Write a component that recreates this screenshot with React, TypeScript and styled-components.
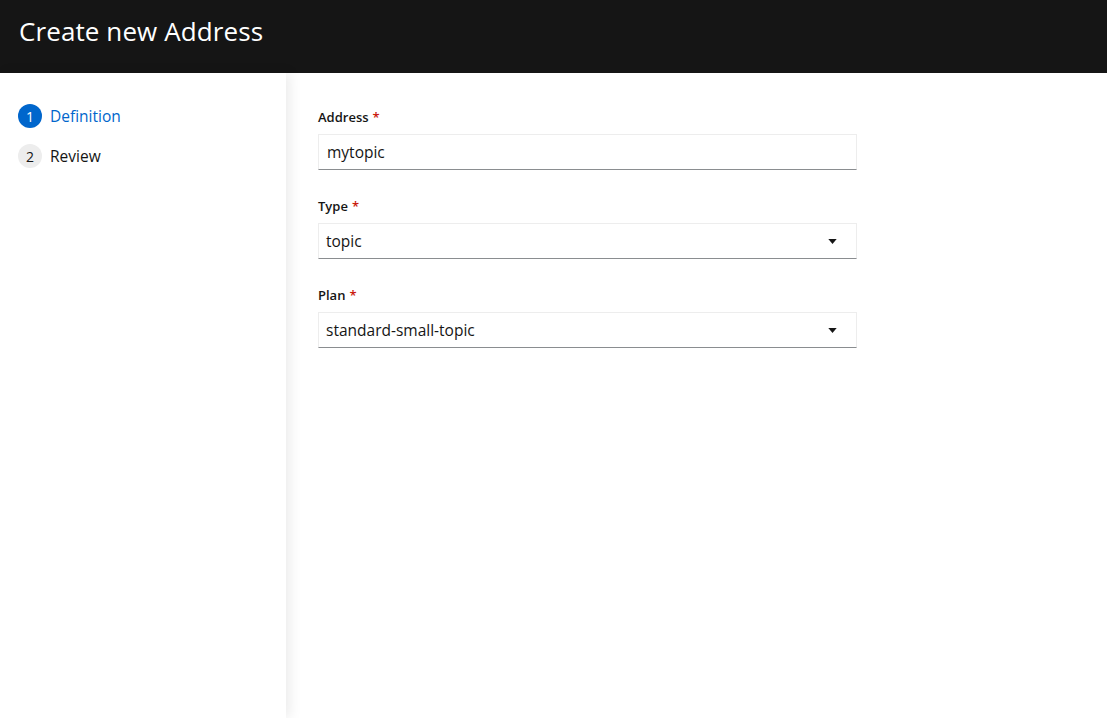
import React from 'react'
import styled, { createGlobalStyle } from 'styled-components'

const GlobalStyle = createGlobalStyle`
  html, body {
    margin: 0;
    padding: 0;
    height: 100%;
    background: #fff;
    font-family: "Open Sans", "Liberation Sans", sans-serif;
    color: #151515;
  }
  #root {
    height: 100%;
  }
`

const Page = styled.div`
  display: flex;
  flex-direction: column;
  height: 718px;
  overflow: hidden;
`

const Header = styled.header`
  height: 73px;
  flex-shrink: 0;
  background: #151515;
  display: flex;
  align-items: center;
  padding: 0 19px;
  box-sizing: border-box;
`

const Title = styled.h1`
  margin: 0 0 12px;
  font-size: 26px;
  font-weight: 400;
  color: #fff;
  letter-spacing: 0.1px;
`

const Body = styled.div`
  flex: 1;
  display: flex;
  min-height: 0;
`

const Nav = styled.nav`
  width: 286px;
  flex-shrink: 0;
  background: #fff;
  box-shadow: 4px 0 12px rgba(3, 3, 3, 0.08);
  position: relative;
  z-index: 1;
  padding: 31px 18px;
  box-sizing: border-box;
  display: flex;
  flex-direction: column;
  gap: 16px;
`

const Step = styled.div`
  display: flex;
  align-items: center;
  gap: 8px;
  height: 24px;
`

const StepNumber = styled.span<{ $active?: boolean }>`
  width: 24px;
  height: 24px;
  border-radius: 50%;
  display: flex;
  align-items: center;
  justify-content: center;
  font-size: 14px;
  background: ${p => (p.$active ? '#0066cc' : '#ededed')};
  color: ${p => (p.$active ? '#fff' : '#151515')};
`

const StepLabel = styled.span<{ $active?: boolean }>`
  font-size: 15.5px;
  color: ${p => (p.$active ? '#0066cc' : '#151515')};
`

const Main = styled.main`
  flex: 1;
  padding: 36px 32px;
  display: flex;
  flex-direction: column;
  gap: 28px;
`

const Group = styled.div`
  display: flex;
  flex-direction: column;
  gap: 8px;
  width: 539px;
`

const Label = styled.label`
  font-size: 13px;
  font-weight: 600;
  line-height: 17px;
  color: #151515;
`

const Required = styled.span`
  color: #c9190b;
  margin-left: 4px;
`

const Field = styled.div<{ $select?: boolean }>`
  height: 36px;
  box-sizing: border-box;
  border: 1px solid #ededed;
  border-bottom-color: #8a8d90;
  display: flex;
  align-items: center;
  justify-content: space-between;
  padding: 0 19px 0 ${p => (p.$select ? 7 : 8)}px;
  font-size: 15.5px;
  color: #151515;
`

const Caret = styled.svg`
  width: 9px;
  height: 5px;
`

function Select({ value }: { value: string }) {
  return (
    <Field $select>
      <span>{value}</span>
      <Caret viewBox="0 0 10 6">
        <path d="M0 0h10L5 6z" fill="#151515" />
      </Caret>
    </Field>
  )
}

export default function App() {
  return (
    <Page>
      <GlobalStyle />
      <Header>
        <Title>Create new Address</Title>
      </Header>
      <Body>
        <Nav>
          <Step>
            <StepNumber $active>1</StepNumber>
            <StepLabel $active>Definition</StepLabel>
          </Step>
          <Step>
            <StepNumber>2</StepNumber>
            <StepLabel>Review</StepLabel>
          </Step>
        </Nav>
        <Main>
          <Group>
            <Label>
              Address<Required>*</Required>
            </Label>
            <Field>mytopic</Field>
          </Group>
          <Group>
            <Label>
              Type<Required>*</Required>
            </Label>
            <Select value="topic" />
          </Group>
          <Group>
            <Label>
              Plan<Required>*</Required>
            </Label>
            <Select value="standard-small-topic" />
          </Group>
        </Main>
      </Body>
    </Page>
  )
}
